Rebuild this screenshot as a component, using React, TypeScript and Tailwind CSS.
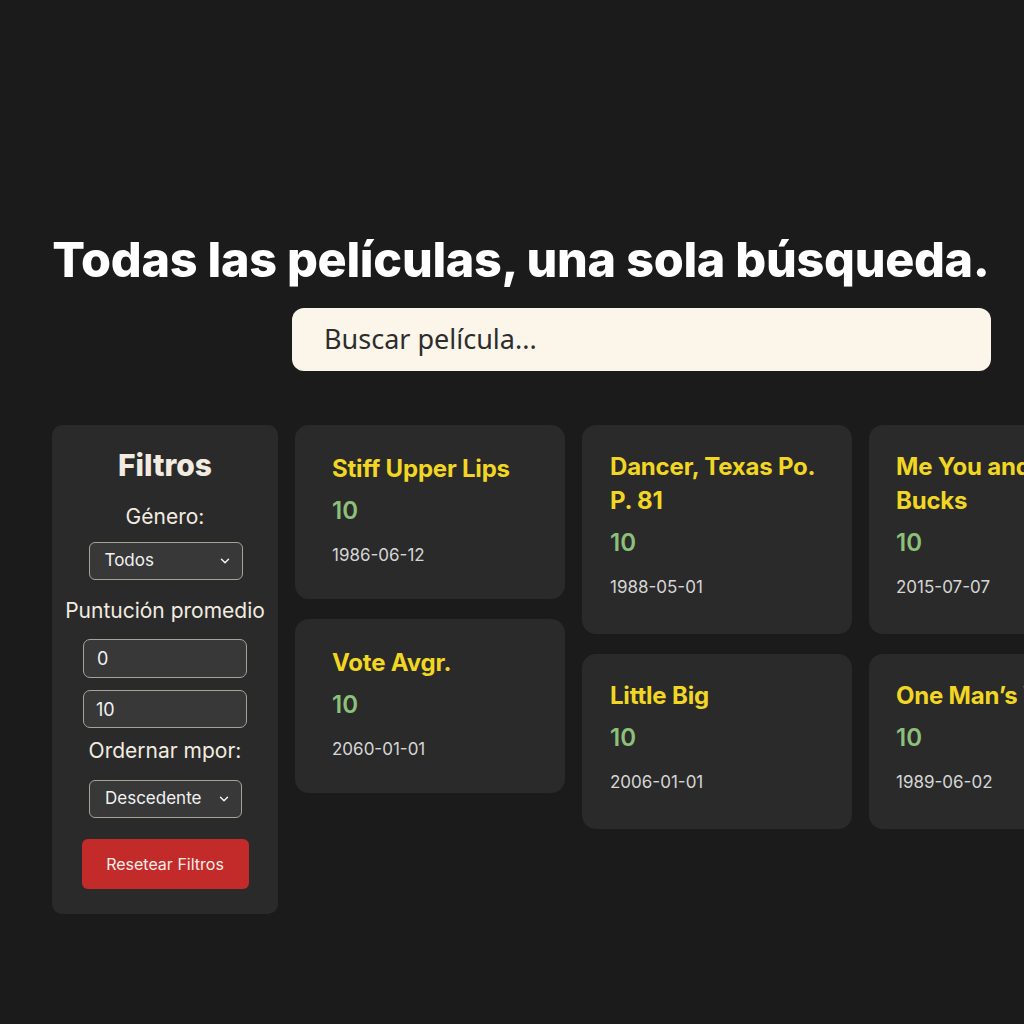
import { ChevronDown } from "lucide-react"

type Movie = { title: string; score: string; date: string }

const columns: { pad: string; top: string; items: Movie[] }[] = [
  {
    pad: "px-[37px]",
    top: "pt-[27px] pb-[32px]",
    items: [
      { title: "Stiff Upper Lips", score: "10", date: "1986-06-12" },
      { title: "Vote Avgr.", score: "10", date: "2060-01-01" },
    ],
  },
  {
    pad: "px-[28px]",
    top: "pt-[25px] pb-[35px]",
    items: [
      { title: "Dancer, Texas Po. P. 81", score: "10", date: "1988-05-01" },
      { title: "Little Big", score: "10", date: "2006-01-01" },
    ],
  },
  {
    pad: "px-[27px]",
    top: "pt-[25px] pb-[35px]",
    items: [
      { title: "Me You and Five Bucks", score: "10", date: "2015-07-07" },
      { title: "One Man’s War", score: "10", date: "1989-06-02" },
    ],
  },
]

const MovieCard = ({ movie, pad, top }: { movie: Movie; pad: string; top: string }) => {
  return (
    <div className={`rounded-[14px] bg-[#2a2a2a] ${pad} ${top}`}>
      <h3 className="text-[24px] font-bold leading-[34px] tracking-[-0.2px] text-[#f2d624]">
        {movie.title}
      </h3>
      <p className="mt-[10px] text-[24px] font-semibold leading-[30px] text-[#8dc07a]">
        {movie.score}
      </p>
      <p className="mt-[17px] text-[17px] leading-[24px] text-[#d6d6d6]">
        {movie.date}
      </p>
    </div>
  )
}

const Select = ({ value, width }: { value: string; width: string }) => {
  return (
    <div
      className={`flex h-[38px] ${width} items-center justify-between rounded-[6px] border border-[#a8a398] bg-[#383838] pl-[15px] pr-[10px] text-[17px] text-[#f2f2f2]`}
    >
      <span>{value}</span>
      <ChevronDown size={14} strokeWidth={2.5} />
    </div>
  )
}

const Filters = () => {
  return (
    <aside className="flex w-[226px] shrink-0 flex-col items-center rounded-[10px] bg-[#2a2a2a] pt-[21px] pb-[25px] text-[#f2ece0]">
      <h2 className="text-[30px] font-extrabold leading-[38px]">Filtros</h2>
      <label className="mt-[19px] text-[21px] leading-[28px]">Género:</label>
      <div className="mt-[11px] ml-[1px]">
        <Select value="Todos" width="w-[154px]" />
      </div>
      <label className="mt-[17px] text-[21px] leading-[28px]">Puntución promedio</label>
      <div className="mt-[14px] flex h-[39px] w-[164px] items-center rounded-[7px] border border-[#a8a398] bg-[#383838] px-[13px] text-[18px] text-[#f2f2f2]">
        0
      </div>
      <div className="mt-[12px] flex h-[38px] w-[164px] items-center rounded-[7px] border border-[#a8a398] bg-[#383838] px-[12px] text-[18px] text-[#f2f2f2]">
        10
      </div>
      <label className="mt-[9px] text-[21px] leading-[28px]">Ordernar mpor:</label>
      <div className="mt-[15px] ml-[1px]">
        <Select value="Descedente" width="w-[153px]" />
      </div>
      <button className="mt-[21px] h-[50px] w-[167px] rounded-[6px] bg-[#c22b2a] text-[16px] text-[#fbeee8]">
        Resetear Filtros
      </button>
    </aside>
  )
}

export default function App() {
  return (
    <div
      className="min-h-[1024px] w-[1024px] overflow-hidden bg-[#1b1b1b] pt-[230px]"
      style={{ fontFamily: "Inter, 'Noto Sans', sans-serif" }}
    >
      <h1 className="pl-[18px] text-center text-[48.5px] font-extrabold leading-[60px] tracking-[-0.3px] text-white">
        Todas las películas, una sola búsqueda.
      </h1>
      <div className="mt-[18px] flex pl-[292px]">
        <div
          className="flex h-[63px] w-[699px] items-center rounded-[12px] bg-[#fbf5ea] pl-[32px] text-[27px] text-[#2d2d2d]"
          style={{ fontFamily: "'Noto Sans', sans-serif" }}
        >
          Buscar película...
        </div>
      </div>
      <div className="mt-[54px] flex items-start gap-[17px] pl-[52px]">
        <Filters />
        {columns.map((col, i) => (
          <div key={i} className="flex w-[270px] shrink-0 flex-col gap-[20px]">
            {col.items.map((m) => (
              <MovieCard key={m.title} movie={m} pad={col.pad} top={col.top} />
            ))}
          </div>
        ))}
      </div>
    </div>
  )
}
